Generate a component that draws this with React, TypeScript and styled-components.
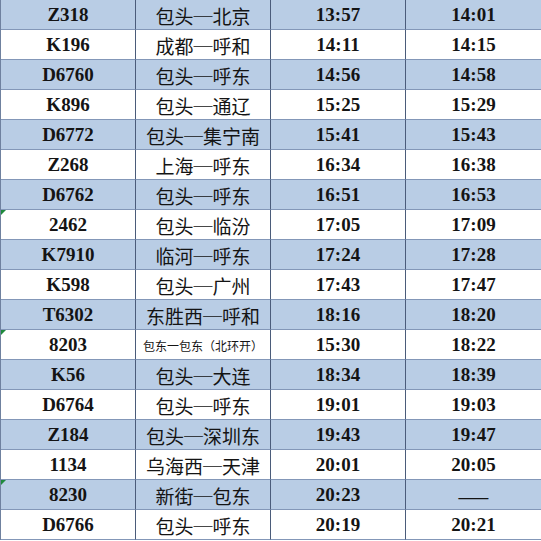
import * as React from 'react'
import styled, { createGlobalStyle } from 'styled-components'

const GlobalStyle = createGlobalStyle`
  html, body {
    margin: 0;
    padding: 0;
    background: #ffffff;
  }
`

type Train = {
  code: string
  route: string
  arrive: string
  leave: string
  small?: boolean
  flag?: boolean
}

// the full-width box line reads like the long dash of the printed sheet
const trains: Train[] = [
  { code: 'Z318', route: '包头─北京', arrive: '13:57', leave: '14:01' },
  { code: 'K196', route: '成都─呼和', arrive: '14:11', leave: '14:15' },
  { code: 'D6760', route: '包头─呼东', arrive: '14:56', leave: '14:58' },
  { code: 'K896', route: '包头─通辽', arrive: '15:25', leave: '15:29' },
  { code: 'D6772', route: '包头─集宁南', arrive: '15:41', leave: '15:43' },
  { code: 'Z268', route: '上海─呼东', arrive: '16:34', leave: '16:38' },
  { code: 'D6762', route: '包头─呼东', arrive: '16:51', leave: '16:53' },
  { code: '2462', route: '包头─临汾', arrive: '17:05', leave: '17:09', flag: true },
  { code: 'K7910', route: '临河─呼东', arrive: '17:24', leave: '17:28' },
  { code: 'K598', route: '包头─广州', arrive: '17:43', leave: '17:47' },
  { code: 'T6302', route: '东胜西─呼和', arrive: '18:16', leave: '18:20' },
  { code: '8203', route: '包东一包东（北环开）', arrive: '15:30', leave: '18:22', small: true, flag: true },
  { code: 'K56', route: '包头─大连', arrive: '18:34', leave: '18:39' },
  { code: 'D6764', route: '包头─呼东', arrive: '19:01', leave: '19:03' },
  { code: 'Z184', route: '包头─深圳东', arrive: '19:43', leave: '19:47' },
  { code: '1134', route: '乌海西─天津', arrive: '20:01', leave: '20:05' },
  { code: '8230', route: '新街─包东', arrive: '20:23', leave: '——', flag: true },
  { code: 'D6766', route: '包头─呼东', arrive: '20:19', leave: '20:21' },
]

const Sheet = styled.div`
  width: 541px;
  display: grid;
  grid-template-columns: 135px 135px 135px 136px;
  grid-auto-rows: 30px;
  border-left: 1px solid #6f819f;
  box-sizing: border-box;
  overflow: hidden;
`

const Row = styled.div<{ $blue: boolean }>`
  display: contents;

  & > div {
    background: ${({ $blue }) => ($blue ? '#b9cde5' : '#ffffff')};
  }
`

const Cell = styled.div<{ $kind: 'code' | 'route' | 'time'; $small?: boolean }>`
  position: relative;
  display: flex;
  align-items: center;
  justify-content: center;
  box-sizing: border-box;
  border-right: 1px solid #4b5c7a;
  border-bottom: 1px solid #8397b8;
  color: #141414;
  white-space: nowrap;
  font-family: ${({ $kind }) =>
    $kind === 'route'
      ? '"Noto Sans CJK SC", "Noto Sans", sans-serif'
      : '"Liberation Serif", "Times New Roman", serif'};
  font-weight: ${({ $kind }) => ($kind === 'route' ? 400 : 700)};
  font-size: ${({ $small }) => ($small ? '12px' : '19px')};
  padding-top: 1px;
`

const Dash = styled.span`
  font-family: "Noto Sans CJK SC", sans-serif;
  font-weight: 400;
  font-size: 19px;
`

const Flag = styled.span`
  position: absolute;
  top: 0;
  left: 0;
  width: 0;
  height: 0;
  border-top: 5px solid #1f8a3c;
  border-right: 5px solid transparent;
`

export default function App() {
  return (
    <>
      <GlobalStyle />
      <Sheet>
        {trains.map((t, i) => (
          <Row key={t.code + i} $blue={i % 2 === 0}>
            <Cell $kind="code">
              {t.flag && <Flag />}
              {t.code}
            </Cell>
            <Cell $kind="route" $small={t.small}>
              {t.route}
            </Cell>
            <Cell $kind="time">{t.arrive}</Cell>
            <Cell $kind="time">
              {t.leave === '——' ? <Dash>——</Dash> : t.leave}
            </Cell>
          </Row>
        ))}
      </Sheet>
    </>
  )
}
